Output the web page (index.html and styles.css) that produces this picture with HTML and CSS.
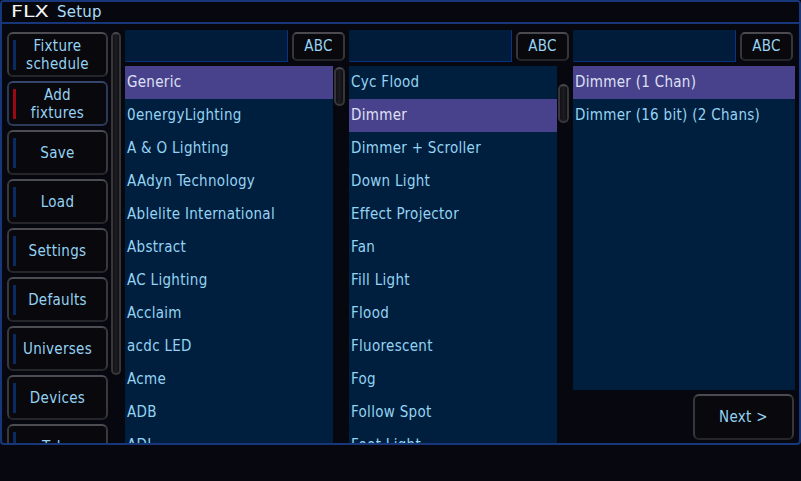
FILE: index.html
```html
<!DOCTYPE html>
<html>
<head>
<meta charset="utf-8">
<link rel="stylesheet" href="styles.css">
</head>
<body>
<div class="window">
  <div class="titlebar"><span class="logo">FLX</span><span class="title">Setup</span></div>
  <div class="main">
    <div class="sidebar">
      <div class="navbtn"><span class="ind"></span><span class="lbl">Fixture<br>schedule</span></div>
      <div class="navbtn active"><span class="ind red"></span><span class="lbl">Add<br>fixtures</span></div>
      <div class="navbtn"><span class="ind"></span><span class="lbl">Save</span></div>
      <div class="navbtn"><span class="ind"></span><span class="lbl">Load</span></div>
      <div class="navbtn"><span class="ind"></span><span class="lbl">Settings</span></div>
      <div class="navbtn"><span class="ind"></span><span class="lbl">Defaults</span></div>
      <div class="navbtn"><span class="ind"></span><span class="lbl">Universes</span></div>
      <div class="navbtn"><span class="ind"></span><span class="lbl">Devices</span></div>
      <div class="navbtn"><span class="ind"></span><span class="lbl">Tabs</span></div>
    </div>
    <div class="side-scroll"><div class="thumb side-thumb"></div></div>

    <div class="col">
      <div class="searchrow"><div class="search"></div><div class="btn abc">ABC</div></div>
      <div class="listwrap">
        <div class="list">
          <div class="item sel">Generic</div>
          <div class="item">0energyLighting</div>
          <div class="item">A &amp; O Lighting</div>
          <div class="item">AAdyn Technology</div>
          <div class="item">Ablelite International</div>
          <div class="item">Abstract</div>
          <div class="item">AC Lighting</div>
          <div class="item">Acclaim</div>
          <div class="item">acdc LED</div>
          <div class="item">Acme</div>
          <div class="item">ADB</div>
          <div class="item">ADJ</div>
        </div>
        <div class="track"><div class="thumb t1"></div></div>
      </div>
    </div>

    <div class="col">
      <div class="searchrow"><div class="search"></div><div class="btn abc">ABC</div></div>
      <div class="listwrap">
        <div class="list">
          <div class="item">Cyc Flood</div>
          <div class="item sel">Dimmer</div>
          <div class="item">Dimmer + Scroller</div>
          <div class="item">Down Light</div>
          <div class="item">Effect Projector</div>
          <div class="item">Fan</div>
          <div class="item">Fill Light</div>
          <div class="item">Flood</div>
          <div class="item">Fluorescent</div>
          <div class="item">Fog</div>
          <div class="item">Follow Spot</div>
          <div class="item">Foot Light</div>
        </div>
        <div class="track"><div class="thumb t2"></div></div>
      </div>
    </div>

    <div class="col col3">
      <div class="searchrow"><div class="search"></div><div class="btn abc">ABC</div></div>
      <div class="list list3">
        <div class="item sel">Dimmer (1 Chan)</div>
        <div class="item">Dimmer (16 bit) (2 Chans)</div>
      </div>
      <div class="footer"><div class="btn next">Next &gt;</div></div>
    </div>
  </div>
</div>
</body>
</html>
```
FILE: styles.css
```css
html, body {
  margin: 0;
  padding: 0;
  background: #07080f;
  width: 801px;
  height: 481px;
  overflow: hidden;
  font-family: "DejaVu Sans Condensed", "DejaVu Sans", sans-serif;
  font-stretch: condensed;
  font-size: 15px;
  letter-spacing: 0.3px;
  color: #95d3f3;
}

.window {
  box-sizing: border-box;
  width: 801px;
  height: 445px;
  border: 2px solid #17377a;
  border-radius: 4px;
  display: flex;
  flex-direction: column;
  overflow: hidden;
  background: #07080f;
}

.titlebar {
  height: 20px;
  flex: none;
  border-bottom: 2px solid #17377a;
  display: flex;
  align-items: center;
  padding-left: 9px;
  background: #07080f;
}

.logo {
  color: #f4f4f4;
  font-family: "DejaVu Sans", sans-serif;
  font-stretch: normal;
  font-size: 16px;
  font-weight: normal;
  letter-spacing: 0px;
  display: inline-block;
  transform: scaleX(1.3);
  transform-origin: left center;
  margin-right: 17px;
  line-height: 1;
}

.title {
  color: #a8dcf8;
  font-family: "DejaVu Sans", sans-serif;
  font-stretch: normal;
  font-size: 15px;
  letter-spacing: 0.2px;
  line-height: 1;
}

.main {
  flex: 1;
  min-height: 0;
  display: flex;
  padding: 6px 4px 0 5px;
  overflow: hidden;
}

.sidebar {
  width: 101px;
  flex: none;
  margin-top: 2px;
  display: flex;
  flex-direction: column;
  gap: 4px;
}

.navbtn {
  box-sizing: border-box;
  height: 45px;
  flex: none;
  border: 2px solid #38383d;
  border-top-color: #4c4c52;
  border-bottom-color: #26262a;
  border-radius: 6px;
  background: #08080d;
  display: flex;
  align-items: center;
}

.navbtn.active {
  border-color: #2c3a58;
  border-top-color: #36466a;
}

.ind {
  width: 3px;
  height: 30px;
  background: #0b2a62;
  margin-left: 4px;
  flex: none;
}

.ind.red { background: #9a0812; }

.lbl {
  flex: 1;
  text-align: center;
  line-height: 18px;
  padding-right: 7px;
}

.side-scroll {
  width: 10px;
  flex: none;
  margin-left: 3px;
  margin-top: 2px;
}

.thumb {
  box-sizing: border-box;
  border: 2px solid #36363b;
  border-top-color: #48484e;
  border-radius: 6px;
  background: linear-gradient(to right, #121216, #1c1c21 50%, #101014);
}

.side-thumb { height: 343px; }

.col {
  width: 220px;
  flex: none;
  margin-left: 4px;
  display: flex;
  flex-direction: column;
}

.col3 { width: 222px; }

.searchrow {
  height: 32px;
  flex: none;
  display: flex;
  align-items: center;
  gap: 4px;
}

.search {
  box-sizing: border-box;
  width: 163px;
  height: 32px;
  background: #001c3a;
  border: 1px solid #001c3a;
  border-right-color: #0a3480;
  border-bottom-color: #0a3480;
}

.btn {
  box-sizing: border-box;
  border: 2px solid #36363b;
  border-top-color: #4a4a50;
  border-bottom-color: #26262a;
  border-radius: 5px;
  background: #08080d;
  display: flex;
  align-items: center;
  justify-content: center;
}

.abc {
  width: 53px;
  height: 29px;
}

.listwrap {
  flex: 1;
  min-height: 0;
  display: flex;
  margin-top: 4px;
}

.list {
  width: 208px;
  flex: none;
  background: #001f3e;
  overflow: hidden;
}

.list3 {
  width: 222px;
  height: 324px;
  margin-top: 4px;
}

.item {
  height: 33px;
  line-height: 33px;
  padding-left: 2px;
  white-space: nowrap;
}

.item.sel {
  background: #48428c;
  color: #dfe0f4;
}

.track {
  flex: 1;
  padding-left: 1px;
}

.t1 { height: 39px; margin-top: 1px; width: 11px; }
.t2 { height: 39px; margin-top: 18px; width: 11px; }

.footer {
  display: flex;
  justify-content: flex-end;
  margin-top: 4px;
  padding-right: 1px;
}

.next {
  width: 101px;
  height: 46px;
  border-radius: 6px;
}
```
